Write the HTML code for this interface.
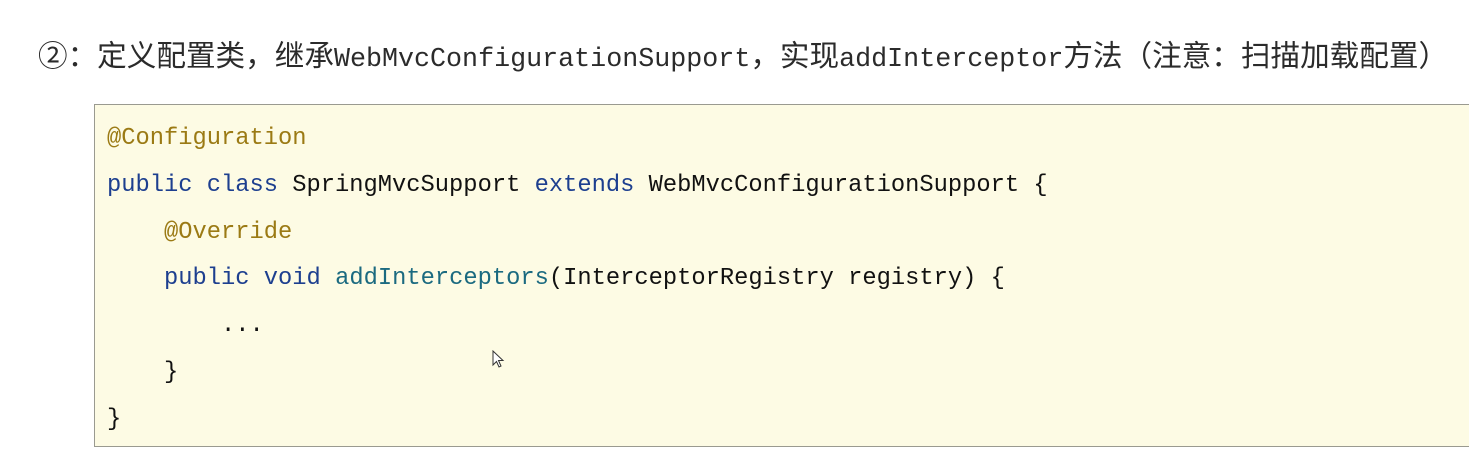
<!DOCTYPE html>
<html><head><meta charset="utf-8"><style>
html,body{margin:0;padding:0;background:#fff;width:1469px;height:470px;overflow:hidden;}
.h{position:absolute;left:38px;top:37px;font-family:"Liberation Mono","Noto Sans CJK SC",monospace;font-size:26.7px;line-height:40px;color:#2b2b2b;white-space:nowrap;}
.h .c{font-family:"Liberation Sans","Noto Sans CJK SC",sans-serif;font-size:29.6px;}
.box{position:absolute;left:94px;top:104px;width:1400px;height:341px;background:#fdfbe4;border:1px solid #9a9a90;border-right:none;}
pre{position:absolute;left:107px;top:116px;margin:0;font-family:"Liberation Mono",monospace;font-size:23.75px;line-height:46.8px;color:#111;}
.a{color:#9b7a14}.k{color:#1d3f8f}.m{color:#1b6a80}
</style></head><body>
<div class="h"><span class="c">②：定义配置类，继承</span>WebMvcConfigurationSupport<span class="c">，实现</span>addInterceptor<span class="c">方法（注意：扫描加载配置）</span></div>
<div class="box"></div>
<pre><span class="a">@Configuration</span>
<span class="k">public class</span> SpringMvcSupport <span class="k">extends</span> WebMvcConfigurationSupport {
    <span class="a">@Override</span>
    <span class="k">public void</span> <span class="m">addInterceptors</span>(InterceptorRegistry registry) {
        ...
    }
}</pre>
<svg style="position:absolute;left:492px;top:350px" width="14" height="20" viewBox="0 0 14 20"><path d="M1 1 L1 15 L4.5 11.5 L7 17 L9 16 L6.5 10.5 L11 10.5 Z" fill="#fff" stroke="#333" stroke-width="1"/></svg>
</body></html>
